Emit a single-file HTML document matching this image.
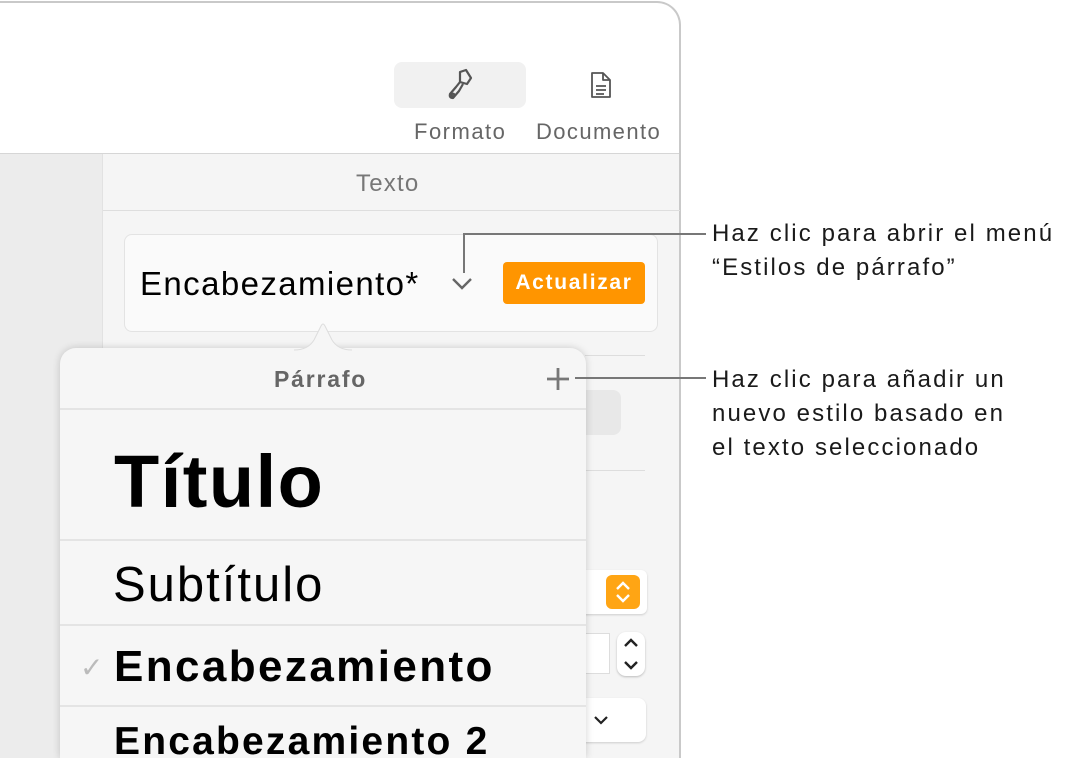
<!DOCTYPE html>
<html><head><meta charset="utf-8"><style>
*{margin:0;padding:0;box-sizing:border-box}
html,body{width:1073px;height:758px;overflow:hidden}
body{background:#fff;position:relative;font-family:"Liberation Sans",sans-serif}
.a{position:absolute}
.win{left:-20px;top:1px;width:701px;height:757px;border:2px solid #c9c9c9;border-bottom:none;border-radius:0 24px 0 0;background:#fff;overflow:hidden}
.t{color:#1a1a1a;font-size:24px;line-height:34px;letter-spacing:2.1px;white-space:nowrap}
</style></head><body>
<div class="a win">
  <div class="a" style="left:18px;top:150px;width:102px;height:610px;background:#ececec"></div>
  <div class="a" style="left:120px;top:150px;width:580px;height:610px;background:#f5f5f5;border-left:1px solid #e2e2e2"></div>
  <div class="a" style="left:18px;top:150px;width:680px;height:1px;background:#d6d6d6"></div>
</div>
<!-- toolbar -->
<div class="a" style="left:394px;top:62px;width:132px;height:46px;background:#f1f1f1;border-radius:8px"></div>
<svg class="a" style="left:444px;top:68px" width="32" height="36" viewBox="0 0 32 36" fill="none" stroke="#555" stroke-width="2.2" stroke-linejoin="round">
<path d="M16 4 L22 2 L27 10 L23 16 L16 14 Z"/><path d="M16 14 L12 19 L6 26 Q5 30 9 30 L15 23 L19 16"/><circle cx="9" cy="27" r="1.3"/></svg>
<svg class="a" style="left:589px;top:70px" width="24" height="30" viewBox="0 0 24 30" fill="none" stroke="#555" stroke-width="1.8" stroke-linejoin="round">
<path d="M3 3 H14 L21 10 V27 H3 Z"/><path d="M14 3 V10 H21"/><path d="M7 16 H17 M7 20 H17 M7 24 H15"/></svg>
<div class="a" style="left:414px;top:119px;font-size:22px;color:#666;letter-spacing:1.5px">Formato</div>
<div class="a" style="left:536px;top:119px;font-size:22px;color:#666;letter-spacing:1.4px">Documento</div>
<div class="a" style="left:356px;top:170px;font-size:24px;color:#777;letter-spacing:1.2px">Texto</div>
<div class="a" style="left:103px;top:210px;width:577px;height:1px;background:#dedede"></div>
<!-- style box -->
<div class="a" style="left:124px;top:234px;width:534px;height:98px;background:#fafafa;border:1px solid #e3e3e3;border-radius:8px"></div>
<div class="a" style="left:140px;top:265px;font-size:33px;color:#000;letter-spacing:1.4px;white-space:nowrap">Encabezamiento*</div>
<svg class="a" style="left:450px;top:274px" width="24" height="18"><path d="M3 5 L12 14 L21 5" fill="none" stroke="#666" stroke-width="2.4"/></svg>
<div class="a" style="left:503px;top:262px;width:142px;height:42px;background:#ff9500;border-radius:4px;color:#fff;font-weight:bold;font-size:21px;line-height:42px;text-align:center;letter-spacing:1.7px">Actualizar</div>
<!-- right controls -->
<div class="a" style="left:585px;top:355px;width:60px;height:1px;background:#ddd"></div>
<div class="a" style="left:575px;top:390px;width:46px;height:45px;background:#e8e8e8;border-radius:8px"></div>
<div class="a" style="left:585px;top:470px;width:60px;height:1px;background:#ddd"></div>
<div class="a" style="left:575px;top:570px;width:72px;height:44px;background:#fff;border-radius:6px;box-shadow:0 1px 2px #ccc"></div>
<div class="a" style="left:606px;top:575px;width:34px;height:34px;background:#ffa514;border-radius:6px"></div>
<svg class="a" style="left:606px;top:575px" width="34" height="34" fill="none" stroke="#fff" stroke-width="2.4"><path d="M11 14 L17 8 L23 14 M11 20 L17 26 L23 20"/></svg>
<div class="a" style="left:580px;top:633px;width:30px;height:41px;background:#fff;border:1px solid #ddd"></div>
<div class="a" style="left:617px;top:632px;width:28px;height:44px;background:#fff;border-radius:9px;box-shadow:0 1px 2px #bbb"></div>
<svg class="a" style="left:617px;top:632px" width="28" height="44" fill="none" stroke="#222" stroke-width="2.4"><path d="M8 14 L14 8 L20 14 M8 30 L14 36 L20 30"/></svg>
<div class="a" style="left:575px;top:698px;width:71px;height:44px;background:#fff;border-radius:8px;box-shadow:0 1px 2px #ccc"></div>
<svg class="a" style="left:590px;top:710px" width="24" height="20" fill="none" stroke="#222" stroke-width="2.2"><path d="M5 7 L11 13 L17 7"/></svg>
<!-- popover -->
<div class="a" style="left:60px;top:348px;width:526px;height:410px;background:#f6f6f6;border-radius:16px 16px 0 0;box-shadow:0 0 8px rgba(0,0,0,.18)"></div>
<svg class="a" style="left:294px;top:320px" width="58" height="32"><path d="M0 30 Q14 30 20 20 L27 6 Q29 2 31 6 L38 20 Q44 30 58 30 Z" fill="#f6f6f6"/><path d="M0 30 Q14 30 20 20 L27 6 Q29 2 31 6 L38 20 Q44 30 58 30" fill="none" stroke="#ddd" stroke-width="1"/></svg>
<div class="a" style="left:274px;top:366px;font-size:23px;font-weight:bold;color:#666;letter-spacing:1.8px">Párrafo</div>
<svg class="a" style="left:544px;top:366px" width="28" height="26"><path d="M14 2 V24 M3 13 H25" stroke="#777" stroke-width="2.8"/></svg>
<div class="a" style="left:60px;top:408px;width:526px;height:2px;background:#e4e4e4"></div>
<div class="a" style="left:114px;top:437px;font-size:74px;font-weight:bold;color:#000;letter-spacing:1.5px;line-height:90px;white-space:nowrap">Título</div>
<div class="a" style="left:60px;top:539px;width:526px;height:2px;background:#e4e4e4"></div>
<div class="a" style="left:113px;top:557px;font-size:49px;color:#000;letter-spacing:2px;line-height:56px;white-space:nowrap">Subtítulo</div>
<div class="a" style="left:60px;top:624px;width:526px;height:2px;background:#e4e4e4"></div>
<div class="a" style="left:80px;top:651px;font-size:28px;color:#bbb">✓</div>
<div class="a" style="left:114px;top:639px;font-size:44px;font-weight:bold;color:#000;letter-spacing:2.4px;line-height:56px;white-space:nowrap">Encabezamiento</div>
<div class="a" style="left:60px;top:705px;width:526px;height:2px;background:#e4e4e4"></div>
<div class="a" style="left:114px;top:719px;font-size:39px;font-weight:bold;color:#000;letter-spacing:2.2px;line-height:46px;white-space:nowrap">Encabezamiento 2</div>
<!-- callouts -->
<div class="a" style="left:463px;top:233px;width:2px;height:40px;background:#777"></div>
<div class="a" style="left:463px;top:233px;width:243px;height:2px;background:#777"></div>
<div class="a" style="left:575px;top:377px;width:131px;height:2px;background:#777"></div>
<div class="a t" style="left:712px;top:217px">Haz clic para abrir el menú<br>“Estilos de párrafo”</div>
<div class="a t" style="left:712px;top:363px">Haz clic para añadir un<br>nuevo estilo basado en<br>el texto seleccionado</div>
</body></html>
